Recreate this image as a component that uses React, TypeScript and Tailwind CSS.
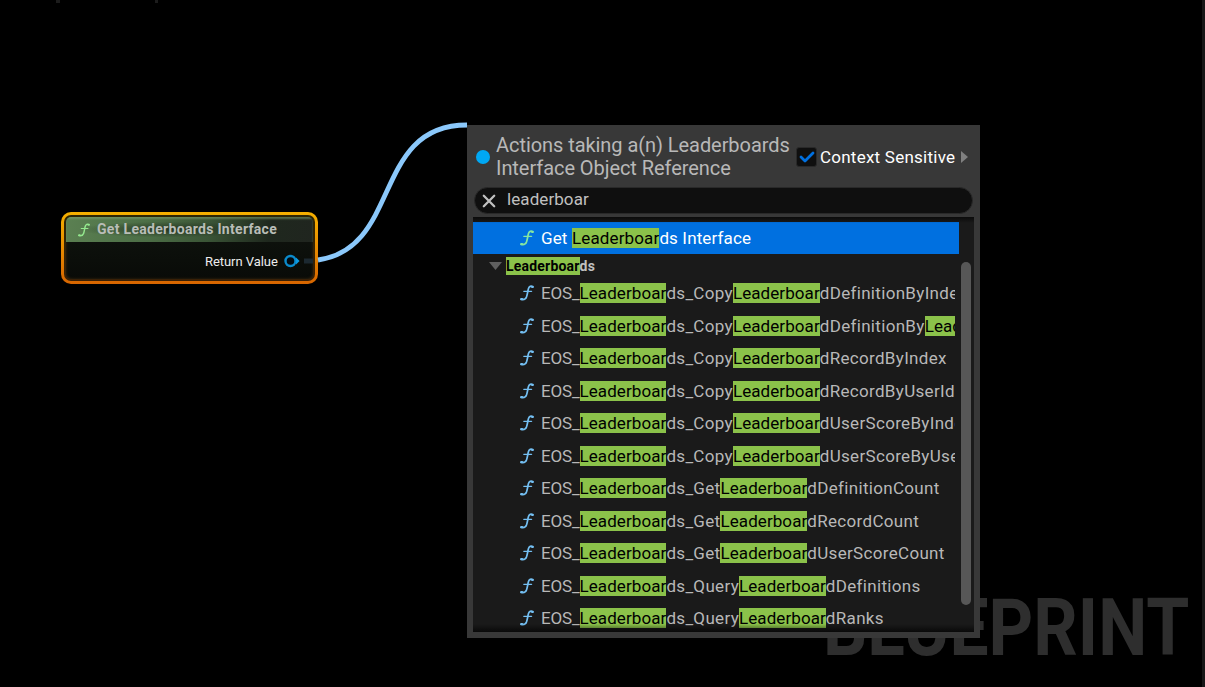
import React from "react";

const MATCH = /(leaderboar)/i;

function Highlighted({ text, mark }: { text: string; mark: string }) {
  return (
    <>
      {text.split(MATCH).map((part, i) =>
        MATCH.test(part) ? (
          <span key={i} className={mark}>
            {part}
          </span>
        ) : (
          <span key={i} className={part === "EOS_" ? "tracking-[-0.150px]" : undefined}>
            {part}
          </span>
        ),
      )}
    </>
  );
}

function FunctionIcon({ className }: { className: string }) {
  return (
    <svg viewBox="0 0 14 16" className={className} fill="none" stroke="currentColor" strokeLinecap="round" strokeLinejoin="round">
      <path d="M12.800 1.500C11 .8 9.200 1.200 8.500 3.600 7.700 6.200 7.500 9.200 6.500 12 5.700 14.400 3.500 14.900 1 14.400" strokeWidth="1.700" />
      <path d="M3.800 6.300H11.600" strokeWidth="1.300" />
      <path d="M12 2H12.900M1.200 14H2.200" strokeWidth="2" />
    </svg>
  );
}

const actions = [
  "EOS_Leaderboards_CopyLeaderboardDefinitionByIndex",
  "EOS_Leaderboards_CopyLeaderboardDefinitionByLeaderboardId",
  "EOS_Leaderboards_CopyLeaderboardRecordByIndex",
  "EOS_Leaderboards_CopyLeaderboardRecordByUserId",
  "EOS_Leaderboards_CopyLeaderboardUserScoreByIndex",
  "EOS_Leaderboards_CopyLeaderboardUserScoreByUserId",
  "EOS_Leaderboards_GetLeaderboardDefinitionCount",
  "EOS_Leaderboards_GetLeaderboardRecordCount",
  "EOS_Leaderboards_GetLeaderboardUserScoreCount",
  "EOS_Leaderboards_QueryLeaderboardDefinitions",
  "EOS_Leaderboards_QueryLeaderboardRanks",
];

function GraphNode() {
  return (
    <div className="absolute left-[61px] top-[212px] h-[72px] w-[257px] rounded-[10px] bg-linear-to-b from-[#f5b000] to-[#d76500] p-[3px]">
      <div className="h-full rounded-[7px] bg-linear-to-b from-[#2c2505] to-[#3a2006] p-[2px]">
        <div className="flex h-full flex-col overflow-hidden rounded-[5px] bg-linear-to-b from-[#10150f] to-[#090b08] shadow-[inset_0_0_3px_#3a2a10]">
          <div className="flex h-[25px] shrink-0 items-center bg-[radial-gradient(ellipse_at_42%_50%,#1c2a1acc_0%,#1c2a1a00_45%),linear-gradient(100deg,#5b8052_0%,#4b6d45_35%,#3a5436_58%,#1f281e_82%,#20251f_100%)] pl-[12px] shadow-[inset_0_2px_2px_#7fa36f90]">
            <FunctionIcon className="h-[14px] w-[12px] text-[#94e88e]" />
            <span className="ml-[7px] whitespace-nowrap pb-[2px] text-[14px] font-bold leading-[22px] tracking-[0.300px] text-[#b9bdb7]">
              Get Leaderboards Interface
            </span>
          </div>
          <div className="flex h-[39px] items-center pl-[139px]">
            <span className="w-[78px] whitespace-nowrap pt-[2px] text-[13px] tracking-[-0.050px] text-[#ededed]">Return Value</span>
            <svg viewBox="0 0 30 14" className="h-[14px] w-[30px] shrink-0">
              <circle cx="7.500" cy="7" r="5" fill="#020a10" stroke="#0b8acb" strokeWidth="2.400" />
              <path d="M13 3.500L16.600 7 13 10.500Z" fill="#0b9be3" />
              <path d="M21 7H30" stroke="#1c2931" strokeWidth="5" />
            </svg>
          </div>
        </div>
      </div>
    </div>
  );
}

function ActionMenu() {
  return (
    <div className="absolute left-[467px] top-[125px] flex h-[513px] w-[513px] flex-col bg-[#383838] px-[6px] pb-[6px]">
      <div className="flex h-[62px] shrink-0 items-center pt-[2px]">
        <div className="ml-[3px] size-[14px] shrink-0 rounded-full bg-[#00a8f4]" />
        <div className="ml-[6px] w-[300px] shrink-0 whitespace-nowrap text-[20px] leading-[23px] tracking-[-0.060px] text-[#b8b8b8]">
          Actions taking a(n) Leaderboards
          <br />
          Interface Object Reference
        </div>
        <div className="flex h-[20px] w-[21px] shrink-0 items-center justify-center rounded-[3px] border border-[#292929] bg-[#0f0f0f]">
          <svg viewBox="0 0 16 12" className="h-[12px] w-[16px]" fill="none" stroke="#0070e0" strokeWidth="2.800" strokeLinecap="round" strokeLinejoin="round">
            <path d="M2 6L6 10 14 2" />
          </svg>
        </div>
        <span className="ml-[3px] w-[140px] shrink-0 whitespace-nowrap pt-px text-[17px] tracking-[0.240px] text-white">Context Sensitive</span>
        <svg viewBox="0 0 7 12" className="ml-[1px] h-[12px] w-[7px] shrink-0 fill-[#808080]">
          <path d="M0 0L7 6 0 12Z" />
        </svg>
      </div>
      <div className="ml-px flex h-[27px] w-[499px] shrink-0 items-center rounded-full border border-[#292929] bg-[#0f0f0f] pl-[7px]">
        <svg viewBox="0 0 14 14" className="size-[14px] shrink-0" stroke="#c0c0c0" strokeWidth="2.300" strokeLinecap="round">
          <path d="M1.800 1.800L12.200 12.200M12.200 1.800L1.800 12.200" />
        </svg>
        <span className="ml-[11px] pb-[2px] text-[17px] tracking-[0.080px] text-[#c0c0c0]">leaderboar</span>
      </div>
      <div className="relative mt-[3px] flex h-[415px] w-[501px] shrink-0 overflow-hidden bg-[#1a1a1a]">
        <div className="w-[486px] pt-[5px]">
          <div className="flex h-[32px] items-center bg-[#0070e0] pl-[47px]">
            <FunctionIcon className="h-[16px] w-[14px] shrink-0 text-[#86e7a0]" />
            <div className="ml-[7px] whitespace-nowrap text-[17px] leading-[20px] tracking-[0.140px] text-white">
              <Highlighted text="Get Leaderboards Interface" mark="inline-block h-[20px] bg-[#8bc24a] text-black" />
            </div>
          </div>
          <div className="flex h-[23px] items-center pl-[16px]">
            <svg viewBox="0 0 13 8" className="h-[8px] w-[13px] fill-[#606060]">
              <path d="M0 0H13L6.500 8Z" />
            </svg>
            <div className="ml-[4px] whitespace-nowrap text-[14px] font-bold leading-[18px] tracking-[0.200px] text-[#c0c0c0]">
              <Highlighted text="Leaderboards" mark="inline-block h-[18px] bg-[#8bc24a] text-black" />
            </div>
          </div>
          {actions.map((name) => (
            <div key={name} className="flex h-[32.500px] w-[482px] items-center overflow-hidden pl-[47px]">
              <FunctionIcon className="h-[16px] w-[14px] shrink-0 text-[#74bff2]" />
              <div className="ml-[7px] whitespace-nowrap text-[17px] leading-[20px] tracking-[0.320px] text-[#b8b8b8]">
                <Highlighted text={name} mark="inline-block h-[20px] bg-[#8bc24a] tracking-[0.080px] text-black" />
              </div>
            </div>
          ))}
        </div>
        <div className="ml-[2px] mt-[45px] h-[343px] w-[10px] rounded-full bg-[#575757]" />
        <div className="absolute inset-x-0 top-0 h-[6px] bg-linear-to-b from-black/60 to-transparent" />
        <div className="absolute inset-x-0 bottom-0 h-[8px] bg-linear-to-t from-black/65 to-transparent" />
      </div>
    </div>
  );
}

export default function App() {
  return (
    <main className="relative h-[687px] w-[1205px] overflow-hidden bg-black font-['Roboto',sans-serif]">
      <div className="absolute left-[56px] top-0 h-[3px] w-[4px] bg-[#1c1c1c]" />
      <div className="absolute left-[155px] top-0 h-[3px] w-[3px] bg-[#1c1c1c]" />
      <div className="absolute right-0 top-0 h-full w-[3px] bg-[#171717]" />
      <div className="absolute left-[823px] top-[581px] origin-left scale-x-[0.868] whitespace-nowrap text-[80px] font-bold leading-[94px] text-[#2e2e2e]">
        BLUEPRINT
      </div>
      <GraphNode />
      <svg viewBox="0 0 1205 687" className="absolute left-0 top-0 h-[687px] w-[1205px]" fill="none">
        <path d="M318 260C402 248 372 125 467 125" stroke="#8bc8fb" strokeWidth="4.800" />
      </svg>
      <ActionMenu />
    </main>
  );
}
